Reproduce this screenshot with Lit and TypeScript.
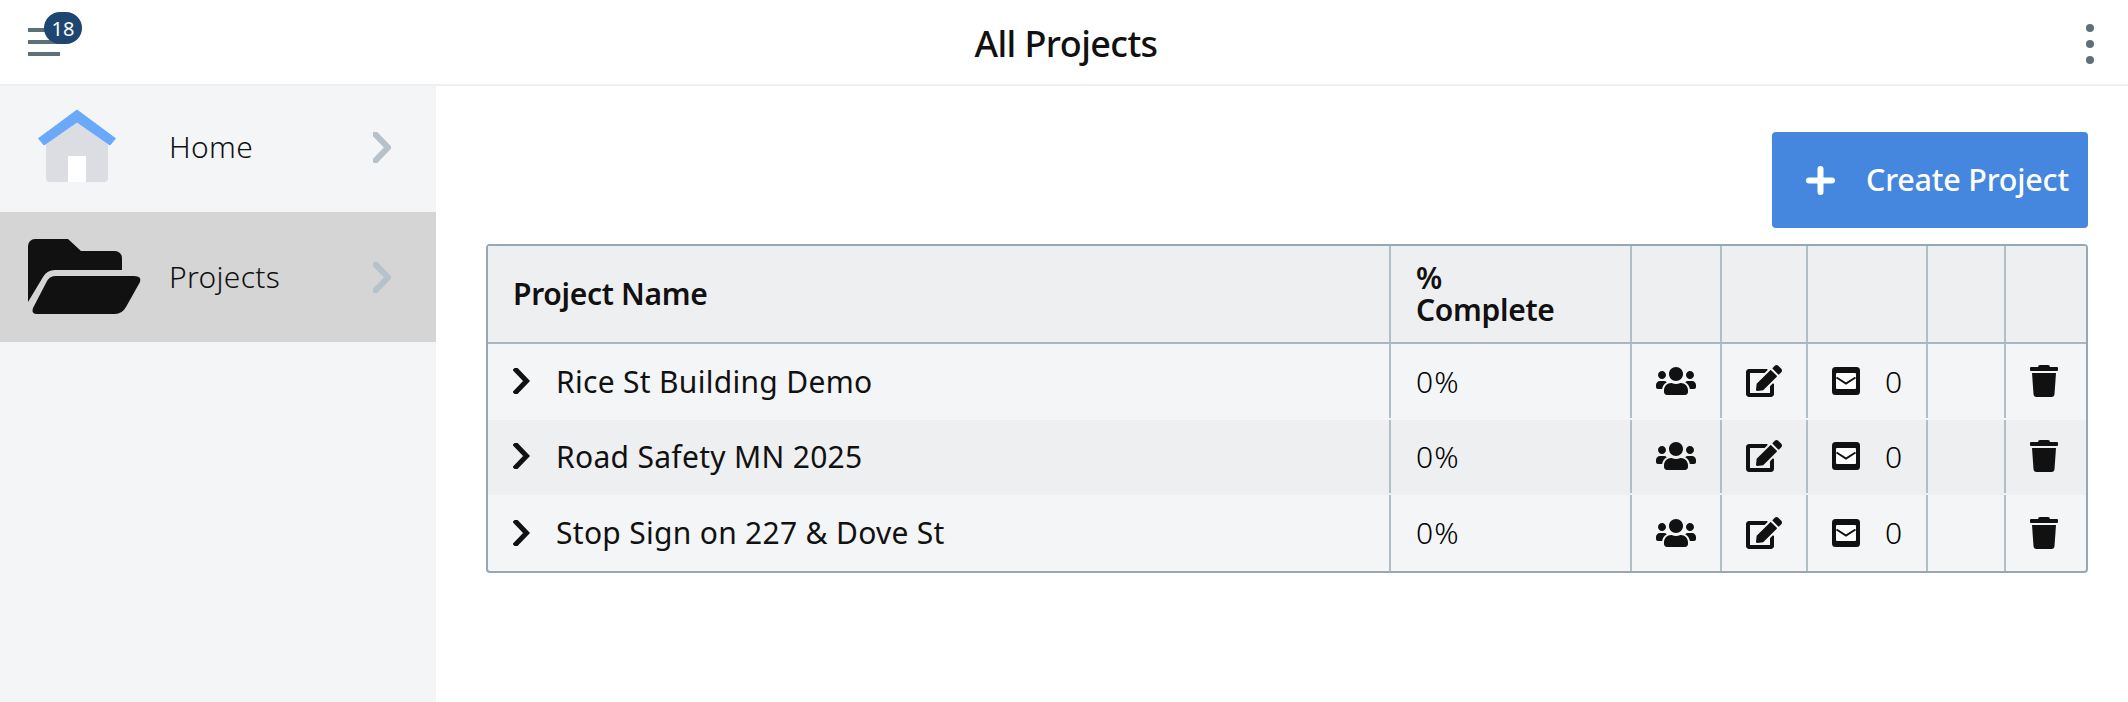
import { LitElement, html, css } from "lit";
import { customElement } from "lit/decorators.js";

const FONT = css`"Noto Sans", "Open Sans", sans-serif`;

const USERS = "M96 224c35.3 0 64-28.7 64-64s-28.7-64-64-64-64 28.7-64 64 28.7 64 64 64zm448 0c35.3 0 64-28.7 64-64s-28.7-64-64-64-64 28.7-64 64 28.7 64 64 64zm32 32h-64c-17.6 0-33.5 7.1-45.1 18.6 40.3 22.1 68.9 62 75.1 109.4h66c17.7 0 32-14.3 32-32v-32c0-35.3-28.7-64-64-64zm-256 0c61.9 0 112-50.1 112-112S381.9 32 320 32 208 82.1 208 144s50.1 112 112 112zm76.8 32h-8.3c-20.8 10-43.9 16-68.5 16s-47.6-6-68.5-16h-8.3C179.6 288 128 339.6 128 403.2V432c0 26.5 21.5 48 48 48h288c26.5 0 48-21.5 48-48v-28.8c0-63.6-51.6-115.2-115.2-115.2zm-223.7-13.4C161.5 263.1 145.6 256 128 256H64c-35.3 0-64 28.7-64 64v32c0 17.7 14.3 32 32 32h65.9c6.3-47.4 34.9-87.3 75.2-109.4z";
const EDIT = "M402.6 83.2l90.2 90.2c3.8 3.8 3.8 10 0 13.8L274.4 405.6l-92.8 10.3c-12.4 1.4-22.9-9.1-21.5-21.5l10.3-92.8L388.8 83.2c3.8-3.8 10-3.8 13.8 0zm162-22.9l-48.8-48.8c-15.2-15.2-39.9-15.2-55.2 0l-35.4 35.4c-3.8 3.8-3.8 10 0 13.8l90.2 90.2c3.8 3.8 10 3.8 13.8 0l35.4-35.4c15.2-15.3 15.2-40 0-55.2zM384 346.2V448H64V128h229.8c3.2 0 6.2-1.3 8.5-3.5l40-40c7.6-7.6 2.2-20.5-8.5-20.5H48C21.5 64 0 85.5 0 112v352c0 26.5 21.5 48 48 48h352c26.5 0 48-21.5 48-48V306.2c0-10.7-12.9-16-20.5-8.5l-40 40c-2.2 2.3-3.5 5.3-3.5 8.5z";

const chevron = (cls: string) => html`<svg class=${cls} viewBox="0 0 18 31" fill="none"><path d="M2.5 2.5 15 15.5 2.5 28.5" stroke="currentColor" stroke-width="6" stroke-linecap="square"/></svg>`;

const rows = [
  { name: "Rice St Building Demo", h: 76 },
  { name: "Road Safety MN 2025", h: 74.5 },
  { name: "Stop Sign on 227 & Dove St", h: 76.5 },
];

@customElement("app-root")
export class AppRoot extends LitElement {
  static styles = css`
    :host { display: block; width: 2128px; height: 702px; background: #fff; font-family: ${FONT}; color: #111; overflow: hidden; }
    .top { height: 84px; border-bottom: 2px solid #f0f0f0; display: flex; align-items: center; position: relative; justify-content: center; }
    .title { font-size: 36px; font-weight: 500; letter-spacing: -0.6px; margin: 2px 0 0 4px; }
    .menu { position: absolute; left: 28px; top: 28px; display: flex; flex-direction: column; gap: 8px; }
    .menu i { display: block; width: 32px; height: 4px; background: #5d7079; }
    .badge { position: absolute; left: 44px; top: 12px; width: 38px; height: 32px; border-radius: 16px; background: #1e4670; color: #fff; font-size: 20px; display: flex; align-items: center; justify-content: center; }
    .dots { position: absolute; left: 2086px; top: 24px; display: flex; flex-direction: column; gap: 8px; }
    .dots i { display: block; width: 8px; height: 8px; border-radius: 50%; background: #5d7079; }
    .body { display: flex; height: 616px; }
    .side { width: 436px; background: #f4f5f7; flex: none; }
    .item { display: flex; align-items: center; padding: 0 45px 0 28px; box-sizing: border-box; }
    .item.home { height: 126px; padding-bottom: 4px; }
    .item.active { height: 130px; background: #d5d5d5; }
    .item .ic { width: 114px; height: 76px; flex: none; display: block; }
    .item span { margin: 0 0 2px 27px; font-size: 30px; font-weight: 300; color: #111; letter-spacing: 0.3px; }
    .nav-chev { width: 18px; height: 31px; color: #b5c2c9; margin-left: auto; flex: none; }
    .main { flex: 1; padding: 46px 40px 0 50px; display: flex; flex-direction: column; align-items: flex-end; }
    .btn { height: 96px; width: 316px; box-sizing: border-box; background: #4586de; border-radius: 4px; color: #fff; display: flex; align-items: center; padding-left: 34px; margin-bottom: 16px; }
    .btn svg { width: 29px; height: 29px; flex: none; }
    .btn span { margin: 0 0 2px 31px; font-size: 30.5px; font-weight: 500; white-space: nowrap; letter-spacing: -0.2px; }
    .table { width: 1602px; box-sizing: border-box; border: 2px solid #98a8b3; border-radius: 4px; background: #f4f5f7; }
    .row { display: grid; grid-template-columns: 903px 241px 90px 86px 120px 78px 80px; }
    .row.head { height: 96px; background: #eeeff1; border-bottom: 2px solid #a9b7c0; }
    .row.even { background: #eeeff1; }
    .cell { border-right: 2px solid #b0bec5; display: flex; align-items: center; min-width: 0; box-sizing: border-box; font-size: 30px; font-weight: 400; letter-spacing: 0.3px; }
    .row:not(.head):not(:last-child) .cell { margin-bottom: 2px; }
    .head .cell { font-size: 30px; font-weight: 600; letter-spacing: -0.3px; line-height: 32px; }
    .cell:last-child { border-right: none; }
    .pad { padding-left: 25px; }
    .r-chev { width: 17px; height: 26px; color: #111; flex: none; margin-right: 26px; }
    .center { justify-content: center; }
    .ic-users { width: 40px; height: 32px; display: block; }
    .ic-edit { width: 36px; height: 32px; display: block; }
    .ic-mail { width: 28px; height: 28px; display: block; flex: none; }
    .ic-trash { width: 28px; height: 32px; display: block; margin-right: 4px; }
    .mail { padding-left: 24px; gap: 25px; font-weight: 300; color: #000; }
    .pct { font-weight: 300; color: #000; letter-spacing: 1.2px; }
    .stack { display: block; }
  `;

  render() {
    return html`
      <div class="top">
        <div class="menu"><i></i><i></i><i></i></div>
        <div class="badge">18</div>
        <div class="title">All Projects</div>
        <div class="dots"><i></i><i></i><i></i></div>
      </div>
      <div class="body">
        <nav class="side">
          <div class="item home">
            <svg class="ic" viewBox="28 109 114 76">
              <path d="M46 143 77 120l31 23v35a4 4 0 0 1-4 4H50a4 4 0 0 1-4-4z" fill="#dbdde3"/>
              <rect x="68" y="156" width="18" height="26" rx="1" fill="#fff"/>
              <path d="M77 110 115.5 138.5 110 145 77 122 44 145 38.5 138.5z" fill="#6aa9fa" stroke="#6aa9fa" stroke-linejoin="round"/>
            </svg>
            <span>Home</span>
            ${chevron("nav-chev")}
          </div>
          <div class="item active">
            <svg class="ic" viewBox="28 239 114 76" fill="#111">
              <path d="M28 246a7 7 0 0 1 7-7h33l13 12h34a7 7 0 0 1 7 7v12H55q-8 0-12 7l-15 25z"/>
              <path d="M55 276h79q8 0 6 6l-14 25q-4 7-11 7H37q-6 0-4-6l13-25q3-7 9-7z"/>
            </svg>
            <span>Projects</span>
            ${chevron("nav-chev")}
          </div>
        </nav>
        <main class="main">
          <div class="btn">
            <svg viewBox="0 0 29 29"><path d="M14.5 3v23M3 14.5h23" stroke="#fff" stroke-width="6" stroke-linecap="round"/></svg>
            <span>Create Project</span>
          </div>
          <div class="table">
            <div class="row head">
              <div class="cell pad"><span>Project Name</span></div>
              <div class="cell pad"><span class="stack">%<br />Complete</span></div>
              <div class="cell"></div><div class="cell"></div><div class="cell"></div><div class="cell"></div><div class="cell"></div>
            </div>
            ${rows.map((r, i) => html`
              <div class="row ${i % 2 ? "even" : ""}" style="height:${r.h}px">
                <div class="cell pad">${chevron("r-chev")}<span>${r.name}</span></div>
                <div class="cell pad pct"><span>0%</span></div>
                <div class="cell center"><svg class="ic-users" viewBox="0 0 640 512" fill="#111"><path d=${USERS}/></svg></div>
                <div class="cell center"><svg class="ic-edit" viewBox="0 0 576 512" fill="#111"><path d=${EDIT}/></svg></div>
                <div class="cell mail">
                  <svg class="ic-mail" viewBox="0 0 28 28">
                    <rect width="28" height="28" rx="3.5" fill="#111"/>
                    <rect x="4" y="6" width="20" height="16" rx="1" fill="#fff"/>
                    <path d="M4.5 10.5 14 16.5l9.5-6" fill="none" stroke="#111" stroke-width="2"/>
                  </svg>
                  <span>0</span>
                </div>
                <div class="cell"></div>
                <div class="cell center">
                  <svg class="ic-trash" viewBox="0 0 28 32" fill="#111">
                    <path d="M8 2q0-2 2-2h8q2 0 2 2h7q1 0 1 1v2q0 1-1 1H1Q0 6 0 5V3q0-1 1-1z"/>
                    <path d="M2 8h24l-1.5 21q-.2 3-3 3H6.5q-2.8 0-3-3z"/>
                  </svg>
                </div>
              </div>
            `)}
          </div>
        </main>
      </div>
    `;
  }
}
